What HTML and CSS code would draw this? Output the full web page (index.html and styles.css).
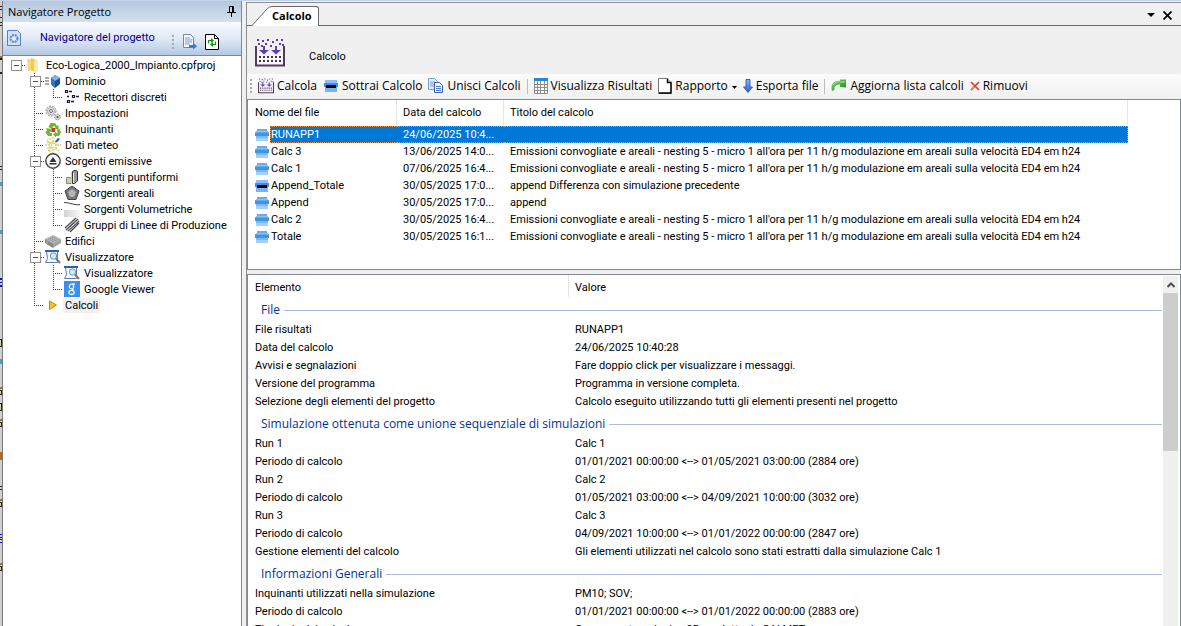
FILE: index.html
```html
<!DOCTYPE html>
<html lang="it">
<head>
<meta charset="utf-8">
<title>Calcolo</title>
<link rel="stylesheet" href="styles.css">
</head>
<body>
<svg class="defs" aria-hidden="true">
  <defs>
    <linearGradient id="g-blue" x1="0" y1="0" x2="0" y2="1"><stop offset="0" stop-color="#8ab8f4"/><stop offset="1" stop-color="#2a5cc0"/></linearGradient>
    <linearGradient id="g-green" x1="0" y1="0" x2="1" y2="1"><stop offset="0" stop-color="#7fd873"/><stop offset="1" stop-color="#118a12"/></linearGradient>
    <linearGradient id="g-fade" x1="0" y1="0" x2="1" y2="0"><stop offset="0" stop-color="#d4d4d4"/><stop offset="1" stop-color="#f6f6f6"/></linearGradient>
    <symbol id="i-stack" viewBox="0 0 16 14"><path d="M3 1h10v2H3z" fill="#6aaaf4"/><path d="M2 3h12v2H2z" fill="#8fc0ff"/><path d="M1 4h14v4H1z" fill="#3f98d4"/><path d="M1 4h14v1H1z" fill="#66a8ee"/><path d="M2 8h12v2H2z" fill="#7ab6ff"/><path d="M2 10h12v3H2z" fill="#a4d0ff"/></symbol>
    <symbol id="i-minus" viewBox="0 0 16 14"><path d="M2 1h12v4H2z" fill="#8fbcff"/><path d="M1 4h14v4H1z" fill="#3f8ce8"/><path d="M2 8h12v5H2z" fill="#78b2ff"/><path d="M3 6h10v3H3z" fill="#000"/></symbol>
    <symbol id="i-calc" viewBox="0 0 30 30"><path d="M2 12h26v15H2z" fill="#f8f6fa"/><path d="M1 8v19.500h28V8" fill="none" stroke="#523c5e" stroke-width="2"/><g fill="#5a3fb4"><path d="M2 1h2v2H2zM7 2h2v2H7zM12 1h2v2h-2zM17 3h2v2h-2zM21 1h2v2h-2zM26 1h2v2h-2zM3 5h2v2H3zM10 5h2v2h-2zM15 7h2v2h-2zM24 5h2v2h-2zM27 6h2v2h-2zM6 7h2v2H6z"/><path d="M8 8h2v4h4l-5 4.500L4 12h4zM20 8h2v4h4l-5 4.500-5-4.500h4z"/></g><path d="M4 19h22M4 23h22" stroke="#443050" stroke-width="2" stroke-dasharray="2 2"/></symbol>
    <symbol id="i-copy" viewBox="0 0 16 16"><path d="M.5.500h6l3 3v8h-9z" fill="#e4eefc" stroke="#7a9cd0"/><path d="M2 4h5M2 6h5M2 8h5" stroke="#7c9ed4"/><path d="M6.500 4.500h5l3 3v7h-8z" fill="#eaf2ff" stroke="#3a62ac"/><path d="M8 8.500h5M8 10.500h5M8 12.500h5" stroke="#5580c8"/></symbol>
    <symbol id="i-table" viewBox="0 0 14 16"><path d="M0 0h14v16H0z" fill="#fff"/><path d="M.5 3v12.500h13V3M0 6.500h14M0 9.500h14M0 12.500h14M3.500 3v13M6.500 3v13M10.500 3v13" fill="none" stroke="#8c8c8c"/><path d="M0 0h14v3H0z" fill="#2b86d8"/></symbol>
    <symbol id="i-page" viewBox="0 0 14 16"><path d="M.5.500h8.500l4 4v11H.500z" fill="#fff" stroke="#777"/><path d="M9.500.500v4h4M13 4.500v10.500H1" fill="none" stroke="#000" stroke-width="1.400"/></symbol>
    <symbol id="i-down" viewBox="0 0 10 14"><path d="M3 .500h4v7.500h2.500L5 13.500.500 8H3z" fill="url(#g-blue)" stroke="#3565b8"/></symbol>
    <symbol id="i-refresh" viewBox="0 0 16 14"><path d="M1 12C-1 6 3 1 9 2V.500h6v8L9 8V5.500C5 5 3 7 3.500 11z" fill="url(#g-green)"/><path d="M2 6c2-3 5-3.500 8-3h4" fill="none" stroke="#a9eba0"/></symbol>
    <symbol id="i-cross" viewBox="0 0 10 10"><path d="M1 1l8 8M9 1 1 9" stroke="#e83a20" stroke-width="1.700"/><path d="M1 9l3-3" stroke="#ef7d62" stroke-width="2"/></symbol>
    <symbol id="i-folder" viewBox="0 0 16 16"><path d="M1 2h5l1 11-5 1z" fill="#f5d978"/><path d="M5 1l5 2v13l-5-3z" fill="#f0c94f"/><path d="M8 4l4-1v11l-4 2z" fill="#fce9a8"/></symbol>
    <symbol id="i-cube" viewBox="0 0 16 16"><path d="M0 5h4M0 8h4M0 11h4" stroke="#555"/><path d="m10 2 5 3v6l-5 4-4-4V5z" fill="#1c4e90"/><path d="m10 2 5 3-5 3-4-3z" fill="#7bb6e8"/><path d="m6 5 4 3v7l-4-4z" fill="#2f77c0"/></symbol>
    <symbol id="i-recept" viewBox="0 0 16 16"><path d="M1.500 1.500h2v2h-2zM8.500 6.500h2v2h-2zM3.500 11.500h2v2h-2z" fill="#fff" stroke="#15154a" stroke-width="1.200"/><path d="M5 2.500h3M12 7.500h3M7 12.500h3M3 7.500h2" stroke="#15154a" stroke-width="1.500"/></symbol>
    <symbol id="i-gears" viewBox="0 0 16 16"><circle cx="6" cy="6" r="5" fill="#eee" stroke="#888" stroke-dasharray="2 1"/><circle cx="6" cy="6" r="3.500" fill="none" stroke="#aaa"/><circle cx="6" cy="6" r="1.500" fill="#fff" stroke="#666"/><circle cx="12.500" cy="12" r="2.800" fill="#ddd" stroke="#777" stroke-dasharray="1.500 1"/><circle cx="12.500" cy="12" r="1" fill="#444"/></symbol>
    <symbol id="i-recycle" viewBox="0 0 16 16"><path d="m3.500 6 2-4H10l2 3 1.500-1v4.500H9L10.500 7 9 4.500 7 8zM1 7l5 1 1 3-1.500-.5-1 1.500H7v3H3L.500 11.500 2 9zM12 9l2.500-1L16 11l-2 4h-3v1.500L8 13.500l3-3V12h1.500z" fill="#73b82a"/><path d="M6.500 7h3.500v4H6.500z" fill="#e32828"/></symbol>
    <symbol id="i-meteo" viewBox="0 0 16 16"><path d="M8 0v16M0 8h16M2 3l12 11M3 14 13 2" stroke="#b5ac6c" stroke-dasharray="2 1"/><path d="M5 1v14M11 3v12M2 5.500h12M2 11h12" stroke="#e6d640" stroke-width="1.500" stroke-dasharray="2 2"/><path d="M7 7h3v3H7z" fill="#fff"/><path d="m10 5 3-4 2 1-3 3z" fill="#1748c4"/></symbol>
    <symbol id="i-emit" viewBox="0 0 16 16"><circle cx="8" cy="8" r="7.200" fill="#f8f8f8" stroke="#444" stroke-width="1.400"/><path d="M8 4 4.500 9h7zM4.500 10h7v1.500h-7z" fill="#333"/></symbol>
    <symbol id="i-point" viewBox="0 0 16 16"><path d="M2.500 8.500h5v6h-5z" fill="#d0cfa8" stroke="#888"/><path d="M7 3h3v12H7z" fill="#ccc"/><path d="M8.500 2.500 10 1.500h2l1.500 1V12l-3 2.500h-2z" fill="#9a9a9a" stroke="#333"/><path d="M9.500 4v10" stroke="#eee"/></symbol>
    <symbol id="i-area" viewBox="0 0 16 16"><path d="m8 1 7 5-3 8.500H4L1 6z" fill="#777" stroke="#444"/><path d="m8 4 4 3-2 5H6L4 7z" fill="#b4b4b4"/></symbol>
    <symbol id="i-vol" viewBox="0 0 16 16"><path d="M0 1c6 0 9 3 16 2v1C9 5 6 2 0 2z" fill="#444"/><path d="M0 9h16v7H0z" fill="url(#g-fade)"/></symbol>
    <symbol id="i-lines" viewBox="0 0 16 16"><path d="M1 11 12 1M2 13 14 2M4 14 15 4M6 15l9-9" stroke="#444" stroke-width="1.300"/><path d="M1 12 13 1.500M3 14 15 3" stroke="#bbb"/></symbol>
    <symbol id="i-build" viewBox="0 0 16 16"><path d="m0 6 8-4 8 4-8 6z" fill="#b4b4b4"/><path d="m0 6 8 5v4l-8-5z" fill="#858585"/><path d="m8 11 8-5v4l-8 5z" fill="#a2a2a2"/><path d="m5 5 6 3M7 4l6 3M3 6l6 3" stroke="#888" stroke-dasharray="1 1"/><path d="M1 8h2v2H1z" fill="#7cc93c"/></symbol>
    <symbol id="i-view" viewBox="0 0 16 16"><path d="M1.500 2.500h11v11H.500l2-4z" fill="#f4f8ff" stroke="#5a7cb8"/><path d="M0 2h14" stroke="#2f5fae" stroke-width="2"/><circle cx="8.500" cy="7" r="3.200" fill="#cdeaff" stroke="#6699bd"/><path d="m11 9.500 4 4.500" stroke="#8a7458" stroke-width="2"/></symbol>
    <symbol id="i-google" viewBox="0 0 16 16"><path d="M0 0h16v16H0z" fill="#3b8ff0"/><ellipse cx="7.500" cy="5.500" rx="2.200" ry="2.300" fill="none" stroke="#e8f2ff" stroke-width="1.300"/><ellipse cx="7.500" cy="11.500" rx="2.700" ry="2" fill="none" stroke="#e8f2ff" stroke-width="1.300"/><path d="M8 3h3M8 7.500l1.500 2" stroke="#e8f2ff" stroke-width="1.300"/></symbol>
    <symbol id="i-play" viewBox="0 0 16 16"><path d="m4.500 4 7 4-7 4.500z" fill="#f4c320" stroke="#c08c10"/></symbol>
  </defs>
</svg>

<div class="window">
  <svg class="edge" viewBox="0 0 2 626" preserveAspectRatio="xMinYMin slice" aria-hidden="true"><path d="M0 5h2v1H0zM0 8h2v1H0zM0 16h2v1H0zM0 21h2v1H0zM0 24h2v1H0zM0 57h2v2H0zM0 71h2v2H0zM0 165h2v1H0zM0 168h2v1H0zM0 338h2v8H0zM0 389h2v5H0zM0 402h2v8H0zM0 421h2v5H0zM0 485h2v1H0zM0 488h2v1H0zM0 501h2v5H0zM0 565h2v5H0z" fill="#222"/><path d="M0 339h1v6H0zM0 390h1v3H0zM0 403h1v6H0zM0 422h1v3H0zM0 502h1v3H0zM0 566h1v3H0z" fill="#d8d2a8"/><path d="M0 55h2v2H0zM0 386h2v2H0zM0 418h2v2H0zM0 451h2v8H0zM0 498h2v2H0zM0 562h2v2H0z" fill="#b86a18"/><path d="M0 181h2v4H0zM0 229h2v4H0zM0 358h2v5H0z" fill="#4a9ad0"/><path d="M0 277h2v2H0zM0 281h2v1H0zM0 284h2v2H0zM0 533h2v1H0zM0 536h2v1H0zM0 538h2v1H0zM0 541h2v1H0z" fill="#1010c0"/></svg>

  <aside class="nav">
    <header class="nav-title">
      <h2>Navigatore Progetto</h2>
      <button class="plain" aria-label="Blocca pannello"><svg width="9" height="11" viewBox="0 0 9 11"><path d="M2.500 6V.500h4V6M5.500.500V6M0 6.500h9M4.500 7v4" fill="none" stroke="#000"/></svg></button>
    </header>
    <div class="nav-bar">
      <svg width="14" height="16" viewBox="0 0 14 16"><path d="M.5.500h10l3 3v12H.500z" fill="#cfe0fa" stroke="#5a7fc4"/><circle cx="7" cy="8.500" r="3.500" fill="none" stroke="#6a86c8" stroke-width="2" stroke-dasharray="2 .8"/><circle cx="7" cy="8.500" r="1.500" fill="#eef"/></svg>
      <span class="nav-name">Navigatore del progetto</span>
      <div class="nav-tools">
        <i class="grip"></i>
        <button class="plain" aria-label="Apri elemento"><svg width="15" height="16" viewBox="0 0 15 16"><path d="M1.500.500h7l3 3v10h-10z" fill="#f4f8ff" stroke="#6c88b8"/><path d="M3 4h5M3 6h7M3 8h7M3 10h5" stroke="#7e9cd0"/><path d="M7 11h4V8.500l4 3.800-4 3.200V13.500H7z" fill="#3b78d8"/></svg></button>
        <button class="plain" aria-label="Aggiorna"><svg width="14" height="16" viewBox="0 0 14 16"><path d="M.5.500h9l4 4v11H.500z" fill="#fff" stroke="#000"/><path d="M9.500.500v4h4" fill="none" stroke="#000"/><path d="M3.500 9.500V6.500H6M10.500 7.500v3H8" fill="none" stroke="#159015" stroke-width="1.200"/><path d="m6 4 3 2.500L6 9zM8 8l-3 2.500L8 13z" fill="#159015"/></svg></button>
      </div>
    </div>
    <ul class="tree">
      <li><i class="cell box"></i><svg class="ic root"><use href="#i-folder"/></svg><span>Eco-Logica_2000_Impianto.cpfproj</span></li>
      <li><i class="cell"></i><i class="cell line box"></i><svg class="ic"><use href="#i-cube"/></svg><span>Dominio</span></li>
      <li><i class="cell"></i><i class="cell line"></i><i class="cell end"></i><svg class="ic"><use href="#i-recept"/></svg><span>Recettori discreti</span></li>
      <li><i class="cell"></i><i class="cell tee"></i><svg class="ic"><use href="#i-gears"/></svg><span>Impostazioni</span></li>
      <li><i class="cell"></i><i class="cell tee"></i><svg class="ic"><use href="#i-recycle"/></svg><span>Inquinanti</span></li>
      <li><i class="cell"></i><i class="cell tee"></i><svg class="ic"><use href="#i-meteo"/></svg><span>Dati meteo</span></li>
      <li><i class="cell"></i><i class="cell line box"></i><svg class="ic"><use href="#i-emit"/></svg><span>Sorgenti emissive</span></li>
      <li><i class="cell"></i><i class="cell line"></i><i class="cell tee"></i><svg class="ic"><use href="#i-point"/></svg><span>Sorgenti puntiformi</span></li>
      <li><i class="cell"></i><i class="cell line"></i><i class="cell tee"></i><svg class="ic"><use href="#i-area"/></svg><span>Sorgenti areali</span></li>
      <li><i class="cell"></i><i class="cell line"></i><i class="cell tee"></i><svg class="ic"><use href="#i-vol"/></svg><span>Sorgenti Volumetriche</span></li>
      <li><i class="cell"></i><i class="cell line"></i><i class="cell end"></i><svg class="ic"><use href="#i-lines"/></svg><span>Gruppi di Linee di Produzione</span></li>
      <li><i class="cell"></i><i class="cell tee"></i><svg class="ic"><use href="#i-build"/></svg><span>Edifici</span></li>
      <li><i class="cell"></i><i class="cell line box"></i><svg class="ic"><use href="#i-view"/></svg><span>Visualizzatore</span></li>
      <li><i class="cell"></i><i class="cell line"></i><i class="cell tee"></i><svg class="ic"><use href="#i-view"/></svg><span>Visualizzatore</span></li>
      <li><i class="cell"></i><i class="cell line"></i><i class="cell end"></i><svg class="ic"><use href="#i-google"/></svg><span>Google Viewer</span></li>
      <li><i class="cell"></i><i class="cell end"></i><svg class="ic"><use href="#i-play"/></svg><span class="current">Calcoli</span></li>
    </ul>
  </aside>

  <main class="doc">
    <div class="tabs">
      <button class="tab"><svg width="20" height="20" viewBox="0 0 20 20"><path d="M0 20 15 3Q17 .500 20 .500V20z" fill="#fff"/><path d="M0 19.500 15 3Q17 .500 20 .500" fill="none" stroke="#696969"/></svg><span>Calcolo</span></button>
      <div class="tab-tools">
        <button class="plain" aria-label="Schede aperte"><svg width="8" height="4" viewBox="0 0 8 4"><path d="M0 0h8L4 4z"/></svg></button>
        <button class="plain" aria-label="Chiudi"><svg width="9" height="9" viewBox="0 0 9 9"><path d="M.5.500l8 8M8.500.500l-8 8" stroke="#000" stroke-width="1.700"/></svg></button>
      </div>
    </div>
    <header class="doc-head">
      <svg width="30" height="30"><use href="#i-calc"/></svg>
      <h1>Calcolo</h1>
    </header>
    <div class="toolbar">
      <i class="grip"></i>
      <button class="tool"><svg width="16" height="16"><use href="#i-calc"/></svg><span>Calcola</span></button>
      <button class="tool"><svg width="16" height="14"><use href="#i-minus"/></svg><span>Sottrai Calcolo</span></button>
      <button class="tool"><svg width="16" height="16"><use href="#i-copy"/></svg><span>Unisci Calcoli</span></button>
      <i class="sep"></i>
      <button class="tool"><svg width="14" height="16"><use href="#i-table"/></svg><span>Visualizza Risultati</span></button>
      <button class="tool"><svg width="14" height="16"><use href="#i-page"/></svg><span>Rapporto</span><svg class="caret" width="5" height="3" viewBox="0 0 5 3"><path d="M0 0h5L2.500 3z"/></svg></button>
      <button class="tool"><svg width="10" height="14"><use href="#i-down"/></svg><span>Esporta file</span></button>
      <i class="sep"></i>
      <button class="tool"><svg width="16" height="14"><use href="#i-refresh"/></svg><span>Aggiorna lista calcoli</span></button>
      <button class="tool"><svg width="10" height="10"><use href="#i-cross"/></svg><span>Rimuovi</span></button>
    </div>

    <section class="runs">
      <table>
        <colgroup><col class="c-name"><col class="c-date"><col></colgroup>
        <thead><tr><th>Nome del file</th><th>Data del calcolo</th><th>Titolo del calcolo</th></tr></thead>
        <tbody>
          <tr class="sel"><td><div class="name"><svg><use href="#i-stack"/></svg><span>RUNAPP1</span></div></td><td>24/06/2025 10:4...</td><td></td></tr>
          <tr><td><div class="name"><svg><use href="#i-stack"/></svg><span>Calc 3</span></div></td><td>13/06/2025 14:0...</td><td>Emissioni convogliate e areali - nesting 5 - micro 1 all'ora per 11 h/g modulazione em areali sulla velocità ED4 em h24</td></tr>
          <tr><td><div class="name"><svg><use href="#i-stack"/></svg><span>Calc 1</span></div></td><td>07/06/2025 16:4...</td><td>Emissioni convogliate e areali - nesting 5 - micro 1 all'ora per 11 h/g modulazione em areali sulla velocità ED4 em h24</td></tr>
          <tr><td><div class="name"><svg><use href="#i-minus"/></svg><span>Append_Totale</span></div></td><td>30/05/2025 17:0...</td><td>append Differenza con simulazione precedente</td></tr>
          <tr><td><div class="name"><svg><use href="#i-stack"/></svg><span>Append</span></div></td><td>30/05/2025 17:0...</td><td>append</td></tr>
          <tr><td><div class="name"><svg><use href="#i-stack"/></svg><span>Calc 2</span></div></td><td>30/05/2025 16:4...</td><td>Emissioni convogliate e areali - nesting 5 - micro 1 all'ora per 11 h/g modulazione em areali sulla velocità ED4 em h24</td></tr>
          <tr><td><div class="name"><svg><use href="#i-stack"/></svg><span>Totale</span></div></td><td>30/05/2025 16:1...</td><td>Emissioni convogliate e areali - nesting 5 - micro 1 all'ora per 11 h/g modulazione em areali sulla velocità ED4 em h24</td></tr>
        </tbody>
      </table>
    </section>

    <section class="details">
      <div class="details-view">
        <table>
          <colgroup><col class="c-item"><col></colgroup>
          <thead><tr><th>Elemento</th><th>Valore</th></tr></thead>
          <tbody>
            <tr><th class="group" colspan="2"><div>File</div></th></tr>
            <tr><td>File risultati</td><td>RUNAPP1</td></tr>
            <tr><td>Data del calcolo</td><td>24/06/2025 10:40:28</td></tr>
            <tr><td>Avvisi e segnalazioni</td><td>Fare doppio click per visualizzare i messaggi.</td></tr>
            <tr><td>Versione del programma</td><td>Programma in versione completa.</td></tr>
            <tr><td>Selezione degli elementi del progetto</td><td>Calcolo eseguito utilizzando tutti gli elementi presenti nel progetto</td></tr>
            <tr><th class="group" colspan="2"><div>Simulazione ottenuta come unione sequenziale di simulazioni</div></th></tr>
            <tr><td>Run 1</td><td>Calc 1</td></tr>
            <tr><td>Periodo di calcolo</td><td>01/01/2021 00:00:00 &lt;--&gt; 01/05/2021 03:00:00 (2884 ore)</td></tr>
            <tr><td>Run 2</td><td>Calc 2</td></tr>
            <tr><td>Periodo di calcolo</td><td>01/05/2021 03:00:00 &lt;--&gt; 04/09/2021 10:00:00 (3032 ore)</td></tr>
            <tr><td>Run 3</td><td>Calc 3</td></tr>
            <tr><td>Periodo di calcolo</td><td>04/09/2021 10:00:00 &lt;--&gt; 01/01/2022 00:00:00 (2847 ore)</td></tr>
            <tr><td>Gestione elementi del calcolo</td><td>Gli elementi utilizzati nel calcolo sono stati estratti dalla simulazione Calc 1</td></tr>
            <tr><th class="group" colspan="2"><div>Informazioni Generali</div></th></tr>
            <tr><td>Inquinanti utilizzati nella simulazione</td><td>PM10; SOV;</td></tr>
            <tr><td>Periodo di calcolo</td><td>01/01/2021 00:00:00 &lt;--&gt; 01/01/2022 00:00:00 (2883 ore)</td></tr>
            <tr><td>Tipologia del calcolo</td><td>Campo meteorologico 3D prodotto da CALMET</td></tr>
          </tbody>
        </table>
      </div>
      <div class="scroll">
        <button class="plain" aria-label="Scorri in alto"><svg width="8" height="6" viewBox="0 0 8 6"><path d="m.500 5L4 1.500 7.500 5" fill="none" stroke="#505050" stroke-width="2"/></svg></button>
        <div class="thumb"></div>
      </div>
    </section>
  </main>
</div>
</body>
</html>
```
FILE: styles.css
```css
* { box-sizing: border-box; }
body {
  margin: 0;
  height: 100vh;
  overflow: hidden;
  background: #f0f0f0;
  color: #000;
  font: 11px/16px Roboto, "Liberation Sans", sans-serif;
}
h1, h2 { margin: 0; font-size: 11px; font-weight: 400; }
button { font: inherit; color: inherit; border: 0; background: none; padding: 0; }
svg { display: block; flex: none; }
.defs { position: absolute; width: 0; height: 0; }
.plain { display: flex; align-items: center; justify-content: center; }

.window { display: flex; height: 100%; border-top: 1px solid #c4d4ea; }
.edge { width: 2px; height: 100%; background: #d0d0d0; }

/* project navigator */
.nav {
  width: 240px;
  flex: none;
  display: flex;
  flex-direction: column;
  border-left: 1px solid #777b80;
  border-right: 1px solid #828790;
  background: #fff;
}
.nav-title {
  height: 21px;
  display: flex;
  align-items: center;
  justify-content: space-between;
  padding: 0 5px;
  background: linear-gradient(#b4c8dc, #d2e0f0);
}
.nav-title h2 { font-family: "Open Sans", sans-serif; }
.nav-bar {
  height: 34px;
  display: flex;
  align-items: center;
  padding: 0 5px 2px 4px;
  background: linear-gradient(#fafcff, #e0e9f6 50%, #b4c8e4);
  border-bottom: 1px solid #828790;
}
.nav-name { color: #000090; flex: 1; padding-left: 19px; white-space: nowrap; }
.nav-tools {
  display: flex;
  align-items: center;
  gap: 8px;
  height: 26px;
  width: 64px;
  flex: none;
  padding-top: 8px;
}
.grip {
  width: 2px;
  height: 14px;
  flex: none;
  background: repeating-linear-gradient(#a8a8a8 0 2px, transparent 2px 4px);
}
.tree { list-style: none; margin: 0; padding: 1px 0 0 3px; }
.tree li { display: flex; height: 16px; align-items: center; white-space: nowrap; }
.tree span { padding: 0 2px; margin-left: 2px; line-height: 15px; }
.tree .current { background: #f0f0f0; }
.ic { width: 16px; height: 16px; margin-left: 1px; }
.cell { width: 19px; height: 16px; flex: none; display: flex; align-items: center; }
.line, .tee { background: repeating-linear-gradient(#444 0 1px, transparent 1px 2px) 9px 0 / 1px 100% no-repeat; }
.end { background: repeating-linear-gradient(#444 0 1px, transparent 1px 2px) 9px 0 / 1px 8px no-repeat; }
.tee::after, .end::after, .box::after {
  content: "";
  height: 1px;
  flex: 1;
  background: repeating-linear-gradient(90deg, #444 0 1px, transparent 1px 2px);
}
.tee::after, .end::after { margin-left: 9px; }
.box::before {
  content: "";
  width: 9px;
  height: 9px;
  margin-left: 5px;
  border: 1px solid #919191;
  background: linear-gradient(#3a54a0, #3a54a0) center / 5px 1px no-repeat #fff;
}

/* document area */
.doc {
  flex: 1;
  min-width: 0;
  margin: 1px 0 0 4px;
  display: flex;
  flex-direction: column;
  border-left: 1px solid #8e8f94;
  border-top: 1px solid #8e8f94;
}
.tabs {
  height: 23px;
  flex: none;
  display: flex;
  justify-content: space-between;
  align-items: flex-end;
  padding: 0 9px 0 5px;
  box-shadow: inset 0 -1px #696969;
}
.tab { display: flex; height: 20px; }
.tab span {
  height: 20px;
  padding: 0 6px 0 0;
  line-height: 18px;
  font-family: "Open Sans", sans-serif;
  font-weight: 700;
  background: #fff;
  border: 1px solid #696969;
  border-width: 1px 1px 0 0;
  border-top-right-radius: 3px;
}
.tab-tools { display: flex; align-items: center; gap: 8px; height: 22px; }
.doc-head { height: 48px; flex: none; display: flex; align-items: center; gap: 24px; padding: 6px 8px 0; }
.doc-head h1 { padding-top: 8px; }
.toolbar {
  height: 25px;
  flex: none;
  display: flex;
  align-items: center;
  padding: 0 0 1px 3px;
  border-radius: 3px;
  background: linear-gradient(#fdfdfd, #f0f0f0);
  font-family: "Open Sans", sans-serif;
  font-size: 12px;
  white-space: nowrap;
}
.tool { display: flex; align-items: center; gap: 3px; margin-left: 6px; }
.tool .caret { margin: 2px 0 0 1px; }
.sep { width: 1px; height: 15px; margin-left: 6px; background: #bdbdbd; }

table { border-collapse: separate; border-spacing: 0; table-layout: fixed; width: 100%; }
th, td { padding: 0 0 0 6px; text-align: left; font-weight: 400; white-space: nowrap; overflow: hidden; }
th:first-child, td:first-child { padding-left: 7px; }
thead th { border-right: 1px solid #e5e5e5; }

.runs {
  height: 171px;
  flex: none;
  padding-right: 52px;
  border: 1px solid #828790;
  background: #fff;
}
.runs thead th { height: 26px; }
.runs td { height: 17px; line-height: 17px; }
.runs td:first-child { padding-left: 6px; }
.c-name { width: 149px; }
.c-date { width: 107px; }
.name { display: flex; align-items: center; height: 17px; }
.name svg { width: 16px; height: 14px; }
.name span { flex: 1; line-height: 15px; padding-left: 1px; border: 1px solid transparent; border-left-width: 0; }
.sel td { background: #0078d7; color: #fff; border: 1px dotted #e8944a; border-width: 1px 0; line-height: 15px; }
.sel td:first-child { background: #fff; border: 0; }
.sel td:last-child { border-right-width: 1px; }
.sel .name span { background: #0078d7; border: 1px dotted #e8944a; border-right: 0; padding-left: 0; }

.details {
  flex: 1;
  min-height: 0;
  margin-top: 4px;
  display: flex;
  border: 1px solid #828790;
  border-bottom: 0;
  background: #fff;
}
.details-view { flex: 1; min-width: 0; overflow: hidden; }
.c-item { width: 321px; }
.details thead th { height: 22px; padding-top: 4px; }
.details thead th:last-child { border-right: 0; }
.details td { height: 18px; line-height: 18px; }
.details .group { height: 24px; padding: 2px 0 0 13px; }
.group div {
  display: flex;
  align-items: center;
  gap: 4px;
  color: #003399;
  font-family: "Open Sans", sans-serif;
  font-size: 12px;
}
.group div::after { content: ""; flex: 1; height: 1px; background: #b0bbdc; }
.scroll { width: 15px; margin: 1px 2px 0 1px; background: #f0f0f0; }
.scroll .plain { width: 100%; height: 17px; }
.thumb { height: 158px; background: #cdcdcd; }
```
